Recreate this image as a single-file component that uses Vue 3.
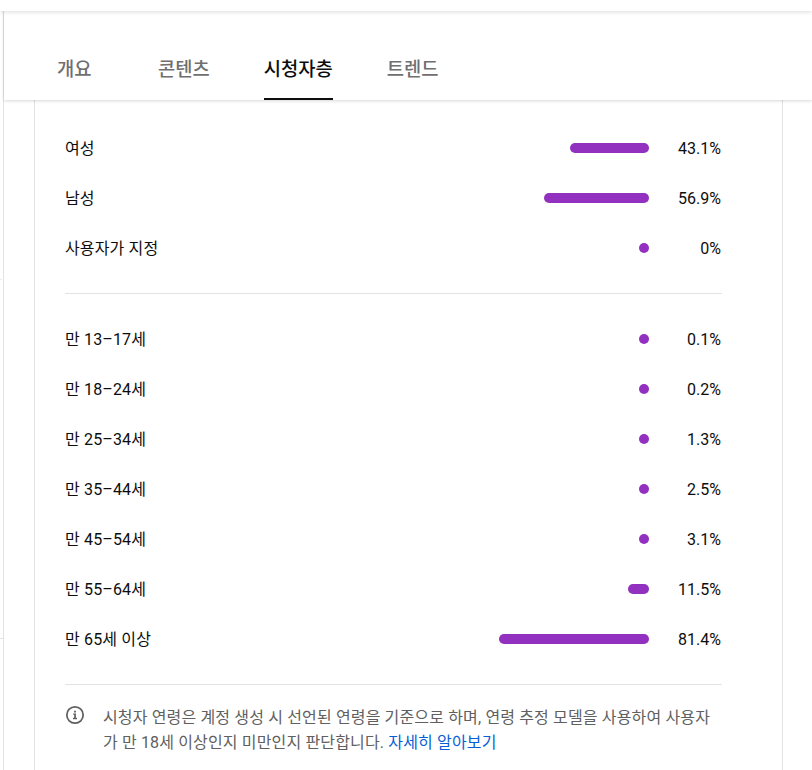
<script setup>
const tabs = [
  { name: '개요' },
  { name: '콘텐츠' },
  { name: '시청자층', active: true },
  { name: '트렌드' },
]

const genders = [
  { label: '여성', pct: 43.1 },
  { label: '남성', pct: 56.9 },
  { label: '사용자가 지정', pct: 0 },
]

const ages = [
  { label: '만 13–17세', pct: 0.1 },
  { label: '만 18–24세', pct: 0.2 },
  { label: '만 25–34세', pct: 1.3 },
  { label: '만 35–44세', pct: 2.5 },
  { label: '만 45–54세', pct: 3.1 },
  { label: '만 55–64세', pct: 11.5 },
  { label: '만 65세 이상', pct: 81.4 },
]

// 막대 길이: 81.4% = 150px, 최소 10px (점)
const barWidth = (pct) => Math.max(10, Math.round(pct * 1.843)) + 'px'
</script>

<template>
  <div class="page">
    <div class="topbar"></div>
    <i class="tick tick-a"></i>
    <i class="tick tick-b"></i>
    <div class="content">
      <header class="tabs">
        <div
          v-for="t in tabs"
          :key="t.name"
          class="tab"
          :class="{ active: t.active }"
        >{{ t.name }}</div>
      </header>
      <main class="card">
        <section class="group first">
          <div v-for="r in genders" :key="r.label" class="row">
            <span class="label">{{ r.label }}</span>
            <span class="bar" :style="{ width: barWidth(r.pct) }"></span>
            <span class="pct">{{ r.pct }}%</span>
          </div>
        </section>
        <section class="group">
          <div v-for="r in ages" :key="r.label" class="row">
            <span class="label">{{ r.label }}</span>
            <span class="bar" :style="{ width: barWidth(r.pct) }"></span>
            <span class="pct">{{ r.pct }}%</span>
          </div>
        </section>
        <footer class="note">
          <svg class="info" viewBox="0 0 24 24" width="20" height="20">
            <circle cx="12" cy="12" r="9.8" fill="none" stroke="#606060" stroke-width="2.1" />
            <path d="M9.8 10.2h3.3v5.2h1.3v1.6H9.6v-1.6h1.4v-3.6H9.8zM10.9 6.8h2.2v2.1h-2.2z" fill="#606060" />
          </svg>
          <p>시청자 연령은 계정 생성 시 선언된 연령을 기준으로 하며, 연령 추정 모델을 사용하여 사용자가 만 18세 이상인지 미만인지 판단합니다. <a>자세히 알아보기</a></p>
        </footer>
      </main>
    </div>
  </div>
</template>

<style>
html, body {
  margin: 0;
  background: #fff;
}
</style>

<style scoped>
.page {
  position: relative;
  width: 812px;
  height: 770px;
  overflow: hidden;
  background: #fff;
  font-family: Roboto, "Noto Sans CJK KR", sans-serif;
  color: #0d0d0d;
}
.topbar {
  position: relative;
  z-index: 1;
  height: 11px;
  background: #fff;
  box-shadow: 0 1px 4px rgba(0, 0, 0, 0.14);
}
/* 왼쪽 뒤 화면에 걸친 선 */
.tick {
  position: absolute;
  left: 0;
  height: 1px;
}
.tick-a {
  top: 279px;
  width: 2px;
  background: #ececec;
}
.tick-b {
  top: 638px;
  width: 3px;
  background: #e3e3e3;
}
.content {
  height: 759px;
  margin-left: 3px;
  border-left: 1px solid #e3e3e3;
}
.tabs {
  position: relative;
  display: flex;
  gap: 54px;
  height: 89px;
  box-sizing: border-box;
  padding-left: 53px;
  background: #fff;
  box-shadow: 0 1px 3px rgba(0, 0, 0, 0.16);
}
.tab {
  min-width: 47px;
  height: 89px;
  box-sizing: border-box;
  padding-top: 44px;
  font-size: 18.75px;
  line-height: 30px;
  font-weight: 500;
  color: #6f6f6f;
}
.tab.active {
  color: #0d0d0d;
  border-bottom: 2px solid #0d0d0d;
}
.card {
  width: 749px;
  height: 670px;
  margin-left: 30px;
  box-sizing: border-box;
  border-left: 1px solid #e3e3e3;
  border-right: 1px solid #e3e3e3;
  padding: 23px 60px 0 30px;
}
.group {
  padding: 20px 0 20px;
  border-bottom: 1px solid #e3e3e3;
}
.group.first {
  padding-top: 0;
}
.row {
  display: flex;
  align-items: center;
  height: 50px;
  font-size: 16px;
}
.label {
  flex: 1;
  margin-bottom: 2px;
  letter-spacing: 0.15px;
}
.bar {
  height: 10px;
  border-radius: 5px;
  background: #9230bf;
}
.pct {
  width: 72px;
  padding-right: 1px;
  text-align: right;
}
.note {
  display: flex;
  gap: 18px;
  padding-top: 20px;
}
.info {
  flex: none;
}
.note p {
  margin: 0;
  font-size: 16px;
  line-height: 25px;
  letter-spacing: 0.15px;
  color: #606060;
}
.note a {
  color: #065fd4;
}
</style>
